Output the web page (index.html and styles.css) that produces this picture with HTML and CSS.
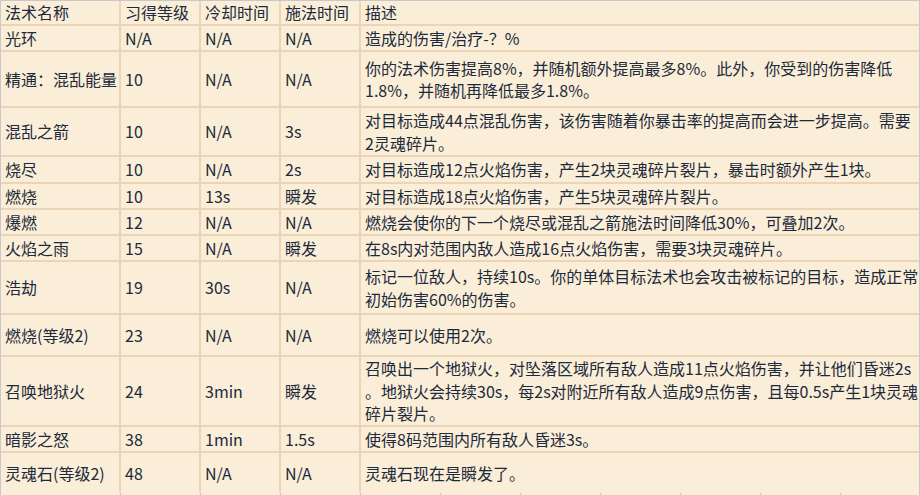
FILE: index.html
```html
<!DOCTYPE html>
<html lang="zh-CN">
<head>
<meta charset="utf-8">
<title>法术列表</title>
<link rel="stylesheet" href="styles.css">
</head>
<body>
<div class="frame">
  <div class="spells">
    <div class="row head">
      <div class="cell"><span>法术名称</span></div>
      <div class="cell"><span>习得等级</span></div>
      <div class="cell"><span>冷却时间</span></div>
      <div class="cell"><span>施法时间</span></div>
      <div class="cell"><span>描述</span></div>
    </div>
    <div class="row">
      <div class="cell"><span>光环</span></div>
      <div class="cell"><span>N/A</span></div>
      <div class="cell"><span>N/A</span></div>
      <div class="cell"><span>N/A</span></div>
      <div class="cell desc"><span>造成的伤害/治疗-？%</span></div>
    </div>
    <div class="row">
      <div class="cell"><span>精通：混乱能量</span></div>
      <div class="cell"><span>10</span></div>
      <div class="cell"><span>N/A</span></div>
      <div class="cell"><span>N/A</span></div>
      <div class="cell desc"><span>你的法术伤害提高8%，并随机额外提高最多8%。此外，你受到的伤害降低<br>1.8%，并随机再降低最多1.8%。</span></div>
    </div>
    <div class="row">
      <div class="cell"><span>混乱之箭</span></div>
      <div class="cell"><span>10</span></div>
      <div class="cell"><span>N/A</span></div>
      <div class="cell"><span>3s</span></div>
      <div class="cell desc"><span>对目标造成44点混乱伤害，该伤害随着你暴击率的提高而会进一步提高。需要<br>2灵魂碎片。</span></div>
    </div>
    <div class="row">
      <div class="cell"><span>烧尽</span></div>
      <div class="cell"><span>10</span></div>
      <div class="cell"><span>N/A</span></div>
      <div class="cell"><span>2s</span></div>
      <div class="cell desc"><span>对目标造成12点火焰伤害，产生2块灵魂碎片裂片，暴击时额外产生1块。</span></div>
    </div>
    <div class="row">
      <div class="cell"><span>燃烧</span></div>
      <div class="cell"><span>10</span></div>
      <div class="cell"><span>13s</span></div>
      <div class="cell"><span>瞬发</span></div>
      <div class="cell desc"><span>对目标造成18点火焰伤害，产生5块灵魂碎片裂片。</span></div>
    </div>
    <div class="row">
      <div class="cell"><span>爆燃</span></div>
      <div class="cell"><span>12</span></div>
      <div class="cell"><span>N/A</span></div>
      <div class="cell"><span>N/A</span></div>
      <div class="cell desc"><span>燃烧会使你的下一个烧尽或混乱之箭施法时间降低30%，可叠加2次。</span></div>
    </div>
    <div class="row">
      <div class="cell"><span>火焰之雨</span></div>
      <div class="cell"><span>15</span></div>
      <div class="cell"><span>N/A</span></div>
      <div class="cell"><span>瞬发</span></div>
      <div class="cell desc"><span>在8s内对范围内敌人造成16点火焰伤害，需要3块灵魂碎片。</span></div>
    </div>
    <div class="row">
      <div class="cell"><span>浩劫</span></div>
      <div class="cell"><span>19</span></div>
      <div class="cell"><span>30s</span></div>
      <div class="cell"><span>N/A</span></div>
      <div class="cell desc"><span>标记一位敌人，持续10s。你的单体目标法术也会攻击被标记的目标，造成正常<br>初始伤害60%的伤害。</span></div>
    </div>
    <div class="row">
      <div class="cell"><span>燃烧(等级2)</span></div>
      <div class="cell"><span>23</span></div>
      <div class="cell"><span>N/A</span></div>
      <div class="cell"><span>N/A</span></div>
      <div class="cell desc"><span>燃烧可以使用2次。</span></div>
    </div>
    <div class="row">
      <div class="cell"><span>召唤地狱火</span></div>
      <div class="cell"><span>24</span></div>
      <div class="cell"><span>3min</span></div>
      <div class="cell"><span>瞬发</span></div>
      <div class="cell desc"><span>召唤出一个地狱火，对坠落区域所有敌人造成11点火焰伤害，并让他们昏迷2s<br>。地狱火会持续30s，每2s对附近所有敌人造成9点伤害，且每0.5s产生1块灵魂<br>碎片裂片。</span></div>
    </div>
    <div class="row">
      <div class="cell"><span>暗影之怒</span></div>
      <div class="cell"><span>38</span></div>
      <div class="cell"><span>1min</span></div>
      <div class="cell"><span>1.5s</span></div>
      <div class="cell desc"><span>使得8码范围内所有敌人昏迷3s。</span></div>
    </div>
    <div class="row">
      <div class="cell"><span>灵魂石(等级2)</span></div>
      <div class="cell"><span>48</span></div>
      <div class="cell"><span>N/A</span></div>
      <div class="cell"><span>N/A</span></div>
      <div class="cell desc"><span>灵魂石现在是瞬发了。</span></div>
    </div>
  </div>
  <div class="next"><div class="ticks"></div></div>
</div>
</body>
</html>
```

FILE: styles.css
```css
html, body {
  margin: 0;
  padding: 0;
  background: #faeed8;
}

.frame {
  width: 918px;
  height: 494px;
  border-top: 1px solid #c8c8cc;
  border-left: 1px solid #c8c8cc;
  border-right: 1px solid #c8c8cc;
  overflow: hidden;
  background: #faeed8;
}

.spells {
  display: grid;
  grid-template-columns: 118px 78px 78px 78px 1fr;
  grid-template-rows: 23px 24px 54px 47px 25px 24px 24px 24px 51px 40px 68px 24px 40px;
  gap: 2px;
  background: #ecd5b7;
  font-family: "Noto Sans CJK SC", "Noto Sans", sans-serif;
  font-size: 16px;
  line-height: 22.4px;
  color: #1d2a3b;
}

.row {
  display: contents;
}

.cell {
  background: #faeed8;
  display: flex;
  align-items: center;
  padding: 0 4px;
  white-space: nowrap;
  overflow: hidden;
}

.cell > span {
  display: block;
}

.next {
  height: 2px;
  padding-left: 119px;
  background: #faeed8;
}

.ticks {
  height: 2px;
  background: repeating-linear-gradient(90deg, #c8c8cc 0 1px, transparent 1px 80px);
}
```
